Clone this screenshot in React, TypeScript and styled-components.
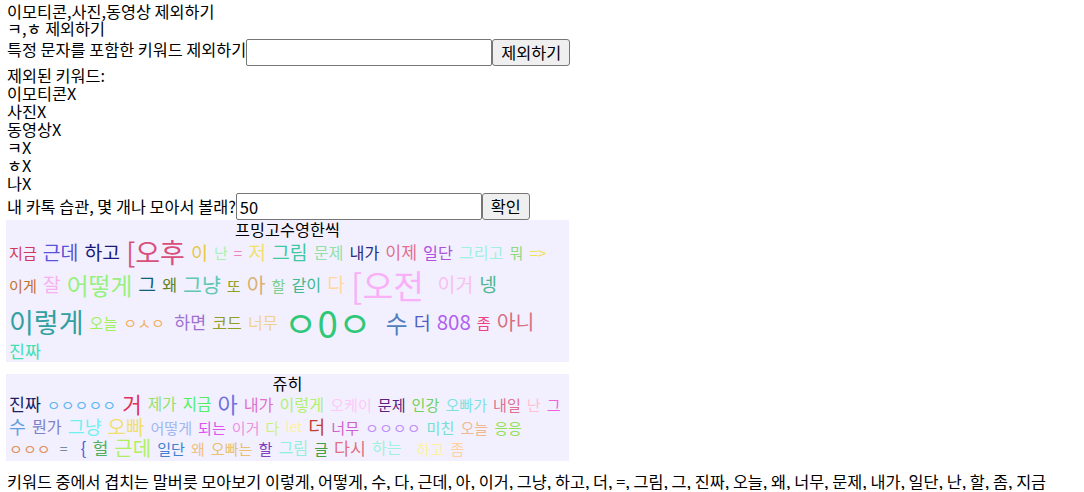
import React from "react";
import styled, { createGlobalStyle } from "styled-components";

const GlobalStyle = createGlobalStyle`
  html, body { margin: 0; padding: 0; background: #ffffff; }
  body {
    font-family: "Noto Sans CJK KR", "Noto Sans", sans-serif;
    font-size: 16.3px;
    color: #000000;
  }
`;

const Page = styled.div`
  display: flex;
  flex-direction: column;
  align-items: flex-start;
  padding: 0 6px;
`;

const Line = styled.div<{ $lh?: number; $pt?: number }>`
  line-height: ${(p) => p.$lh ?? 18}px;
  padding-top: ${(p) => p.$pt ?? 0}px;
  padding-left: 1px;
  white-space: nowrap;
`;

const FormRow = styled.div<{ $pt: number }>`
  display: flex;
  align-items: flex-start;
  padding-top: ${(p) => p.$pt}px;
`;

const FormLabel = styled.span<{ $mt: number }>`
  line-height: 18px;
  margin-top: ${(p) => p.$mt}px;
  padding-left: 1px;
  white-space: nowrap;
`;

const TextInput = styled.input`
  box-sizing: border-box;
  width: 246px;
  height: 27px;
  margin: 0;
  padding: 1px 3px 0;
  border: 1px solid #767676;
  border-radius: 2px;
  font-family: "Noto Sans CJK KR", "Noto Sans", sans-serif;
  font-size: 16.5px;
  color: #000;
  background: #fff;
`;

const Button = styled.button`
  box-sizing: border-box;
  height: 27px;
  margin: 0;
  padding: 0 8px;
  border: 1px solid #767676;
  border-radius: 3px;
  background: #efefef;
  font-family: "Noto Sans CJK KR", "Noto Sans", sans-serif;
  font-size: 16.3px;
  color: #000;
  line-height: 25px;
`;

const Cloud = styled.section<{ $mb: number }>`
  box-sizing: border-box;
  width: 563px;
  background: #f2f0ff;
  margin-bottom: ${(p) => p.$mb}px;
  padding: 0 0 2px 3px;
`;

const CloudTitle = styled.div`
  line-height: 18px;
  text-align: center;
  margin-left: -3px;
`;

const Words = styled.div`
  display: flex;
  flex-direction: column;
`;

const WordRow = styled.div`
  display: flex;
  flex-wrap: nowrap;
  align-items: center;
  column-gap: 6px;
`;

const Word = styled.span<{ $size: number; $color: string }>`
  font-size: ${(p) => (p.$size * 1.08).toFixed(1)}px;
  line-height: 1.07;
  color: ${(p) => p.$color};
  white-space: pre;
`;

type W = [string, number, string];

const cloudA: W[][] = [
  [
    ["지금", 14, "#d2385a"],
    ["근데", 18, "#5a52d8"],
    ["하고", 18, "#1a1a7a"],
    ["[오후", 25, "#d84f7a"],
    ["이", 17, "#e6c84a"],
    ["난", 14, "#a8f0b0"],
    ["=", 14, "#f080c0"],
    ["저", 18, "#f0e070"],
    ["그림", 18, "#40c8a0"],
    ["문제", 15, "#90e0a8"],
    ["내가", 15, "#2a2a80"],
    ["이제", 16, "#e07090"],
    ["일단", 15, "#b050e0"],
    ["그리고", 15, "#a0f0e0"],
    ["뭐", 14, "#90d880"],
    ["=>", 14, "#f0e060"],
  ],
  [
    ["이게", 14, "#c07030"],
    ["잘", 18, "#f8b0f0"],
    ["어떻게", 22, "#98f080"],
    ["그", 18, "#106078"],
    ["왜", 15, "#608020"],
    ["그냥", 19, "#60c8b0"],
    ["또", 14, "#90a020"],
    ["아", 19, "#d8b070"],
    ["할", 14, "#80d090"],
    ["같이", 15, "#40b890"],
    ["다", 18, "#ffd8a0"],
    ["[오전 ", 31, "#f8b0f8"],
    ["이거", 18, "#f8c0f0"],
    ["넹", 18, "#50b890"],
  ],
  [
    ["이렇게", 25, "#30a0a0"],
    ["오늘", 14, "#a0f060"],
    ["ㅇㅅㅇ ", 14, "#f0b060"],
    ["하면", 16, "#a070d0"],
    ["코드", 15, "#90a020"],
    ["너무", 15, "#f0d090"],
    ["ㅇ0ㅇ ", 34, "#30c878"],
    ["수", 22, "#5080c0"],
    ["더", 17, "#5060c0"],
    ["808", 19, "#b060f0"],
    ["좀", 14, "#f04080"],
    ["아니", 19, "#d87080"],
  ],
  [["진짜", 16, "#40e0b0"]],
];

const cloudB: W[][] = [
  [
    ["진짜", 16, "#202060"],
    ["ㅇㅇㅇㅇㅇ", 14, "#60b8f0"],
    ["거", 19.5, "#e0305a"],
    ["제가", 14.5, "#90e070"],
    ["지금", 14.5, "#50f060"],
    ["아", 20.4, "#7070e0"],
    ["내가", 15, "#e070d0"],
    ["이렇게", 15, "#b0f070"],
    ["오케이", 14, "#ffc8f8"],
    ["문제", 14, "#602080"],
    ["인강", 14, "#70d060"],
    ["오빠가", 14, "#80e0e0"],
    ["내일", 14, "#e07090"],
    ["난", 14, "#ffc0d0"],
    ["그", 14, "#f060e0"],
  ],
  [
    ["수", 17, "#60a0e0"],
    ["뭔가", 15, "#8080c8"],
    ["그냥", 17, "#70f0f0"],
    ["오빠", 18.5, "#f0e070"],
    ["어떻게", 14, "#a0b8f0"],
    ["되는", 14, "#e050f0"],
    ["이거", 14, "#f090e0"],
    ["다", 14, "#d0f070"],
    ["let", 13, "#fff0a0"],
    ["더", 17, "#c04030"],
    ["너무", 14, "#d060d0"],
    ["ㅇㅇㅇㅇ", 14, "#c090f8"],
    ["미친", 14, "#70e0d0"],
    ["오늘", 14, "#f0b890"],
    ["응응", 14, "#90e060"],
  ],
  [
    ["ㅇㅇㅇ", 14, "#e09060"],
    [" = ", 13, "#7090a0"],
    [" {", 16, "#4060e0"],
    ["헐", 16, "#50b060"],
    ["근데", 18.5, "#b0f060"],
    ["일단", 14, "#4080d0"],
    ["왜", 14, "#f0c080"],
    ["오빠는", 14, "#e8c070"],
    ["할", 14, "#8040c0"],
    ["그림", 15, "#90f0e0"],
    ["글", 14, "#40a040"],
    ["다시", 16, "#e07080"],
    ["하는", 15, "#a0f0e0"],
    [" ", 12, "#000"],
    ["하고", 14, "#fff0a0"],
    ["좀", 14, "#ffd0a0"],
  ],
];

const excluded = ["이모티콘", "사진", "동영상", "ㅋ", "ㅎ", "나"];

const common = [
  "이렇게", "어떻게", "수", "다", "근데", "아", "이거", "그냥", "하고", "더", "=",
  "그림", "그", "진짜", "오늘", "왜", "너무", "문제", "내가", "일단", "난", "할", "좀", "지금",
];

function WordCloud({ title, rows, mb }: { title: string; rows: W[][]; mb: number }) {
  return (
    <Cloud $mb={mb}>
      <CloudTitle>{title}</CloudTitle>
      <Words>
        {rows.map((row, ri) => (
          <WordRow key={ri}>
            {row.map(([t, s, c], i) => (
              <Word key={i} $size={s} $color={c}>
                {t}
              </Word>
            ))}
          </WordRow>
        ))}
      </Words>
    </Cloud>
  );
}

export default function App() {
  return (
    <>
      <GlobalStyle />
      <Page>
        <Line $pt={2}>이모티콘,사진,동영상 제외하기</Line>
        <Line $lh={16}>ㅋ,ㅎ 제외하기</Line>
        <FormRow $pt={3}>
          <FormLabel $mt={1}>특정 문자를 포함한 키워드 제외하기</FormLabel>
          <TextInput type="text" defaultValue="" />
          <Button type="button">제외하기</Button>
        </FormRow>
        <Line>제외된 키워드:</Line>
        {excluded.map((k) => (
          <Line key={k}>{k}X</Line>
        ))}
        <FormRow $pt={1}>
          <FormLabel $mt={4}>내 카톡 습관, 몇 개나 모아서 볼래?</FormLabel>
          <TextInput type="text" defaultValue="50" />
          <Button type="button">확인</Button>
        </FormRow>
        <WordCloud title="프밍고수영한씩" rows={cloudA} mb={12} />
        <WordCloud title="쥬히" rows={cloudB} mb={11} />
        <Line>키워드 중에서 겹치는 말버릇 모아보기 {common.join(", ")}</Line>
      </Page>
    </>
  );
}
